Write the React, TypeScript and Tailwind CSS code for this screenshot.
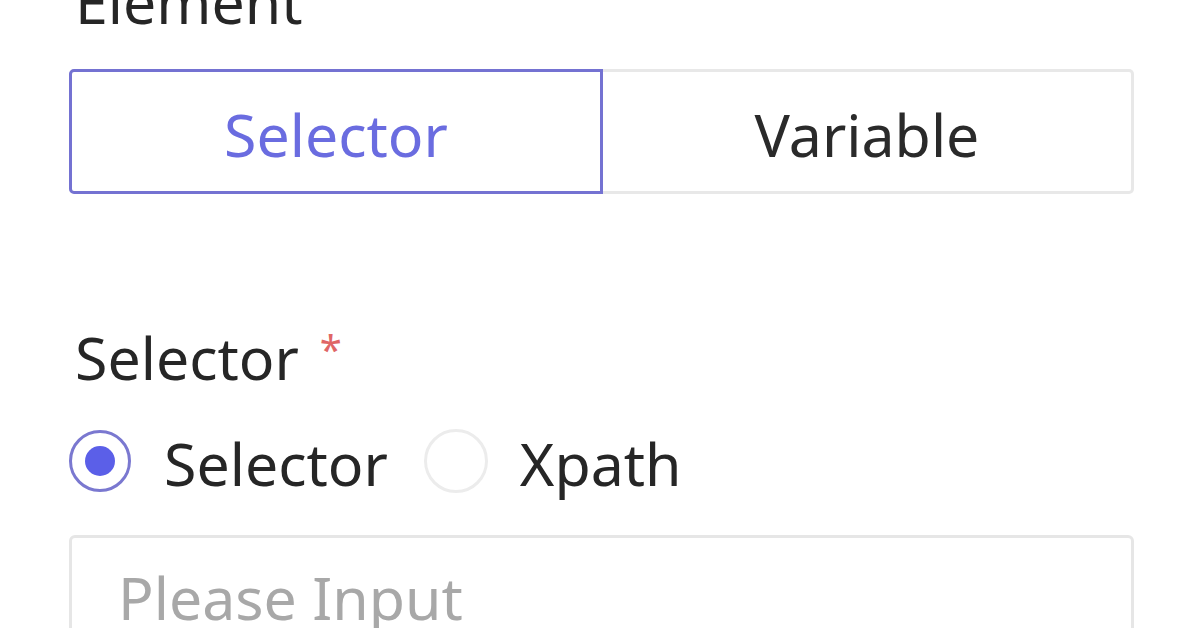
import React from "react";

export default function App() {
  return (
    <div
      className="w-[1196px] h-[628px] overflow-hidden bg-white text-[#262626]"
      style={{ fontFamily: '"Noto Sans", "Open Sans", sans-serif' }}
    >
      <div className="pl-[69px] pr-[62px]">
        <div className="h-[46px] -mt-[22px] pl-[6px] text-[59px] leading-[46px] flex items-end">
          Element
        </div>
        <div className="mt-[45px] flex h-[125px]">
          <button className="flex-1 rounded-l-[5px] border-[3px] border-[#7472d2] pt-[6px] text-[59px] text-[#6a6ce0] flex items-center justify-center">
            Selector
          </button>
          <button className="flex-1 rounded-r-[5px] border-[3px] border-l-0 border-[#e8e8e8] pt-[6px] text-[59px] text-[#2a2a2a] flex items-center justify-center">
            Variable
          </button>
        </div>
        <div className="mt-[135px] pl-[6px] h-[56px] flex items-center text-[59px] leading-none">
          <span>Selector</span>
          <span className="ml-[21px] self-start mt-[0px] text-[40px] text-[#e06666]">*</span>
        </div>
        <div className="mt-[44px] flex items-center h-[64px] text-[59px]">
          <span className="w-[62px] h-[62px] rounded-full border-[3px] border-[#7a78d0] flex items-center justify-center">
            <span className="w-[30px] h-[30px] rounded-full bg-[#5b5fe8]" />
          </span>
          <span className="ml-[33px] pt-[4px]">Selector</span>
          <span className="ml-[36px] w-[64px] h-[64px] rounded-full border-[3px] border-[#ececec]" />
          <span className="ml-[32px] pt-[4px]">Xpath</span>
        </div>
        <div className="mt-[42px] h-[140px] rounded-[6px] border-[3px] border-[#e6e6e6] pl-[46px] pt-[30px] text-[59px] text-[#a8a8a8] leading-none">
          Please Input
        </div>
      </div>
    </div>
  );
}
